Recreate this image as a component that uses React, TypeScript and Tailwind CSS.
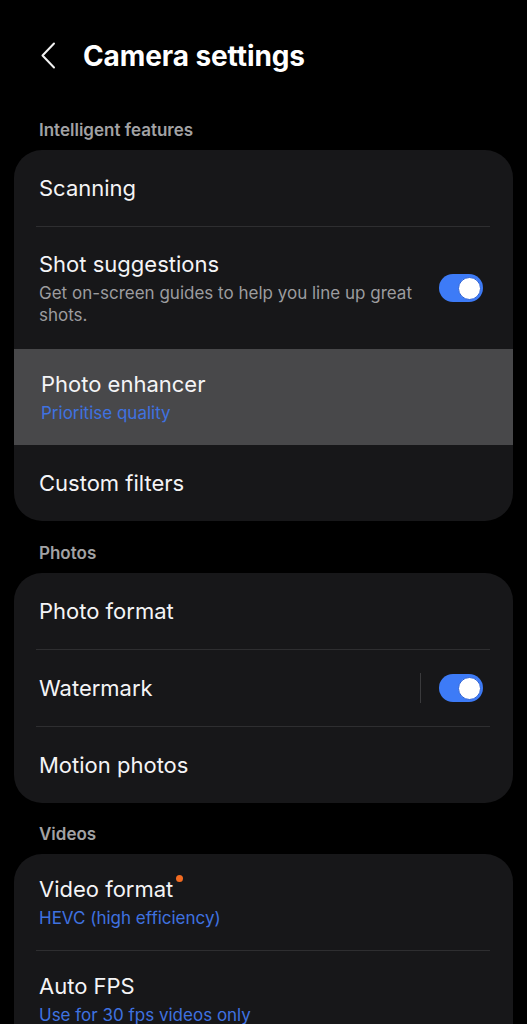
import React from 'react';

type Row = {
  title: string;
  subtitle?: string;
  blue?: boolean;
  toggle?: boolean;
  divider?: boolean;
  dot?: boolean;
  highlight?: boolean;
};

function Toggle() {
  return (
    <div className="flex h-[28px] w-[44px] shrink-0 items-center justify-end rounded-full bg-[#3d7bf7] pr-[2px]">
      <div className="h-[23px] w-[23px] rounded-full border border-[#2f63d6] bg-white" />
    </div>
  );
}

function SectionLabel({ text, top }: { text: string; top?: string }) {
  return (
    <div className={`px-[39px] pb-[10px] ${top ?? 'pt-[22px]'} text-[17px] font-semibold leading-[20px] text-[#a2a2a4]`}>
      {text}
    </div>
  );
}

function SettingRow({ row, height, pad }: { row: Row; height?: string; pad?: string }) {
  const hasSub = !!row.subtitle;
  return (
    <div
      className={`flex items-center ${row.highlight ? 'bg-[#48484a] pl-[27px]' : 'pl-[25px]'} pr-[30px] ${
        hasSub ? pad ?? 'pb-[21px] pt-[21px]' : ''
      } ${height ?? ''}`}
    >
      <div className="min-w-0 flex-1">
        <div className="flex items-start">
          <span className="text-[22px] leading-[28px] text-[#f4f4f6]">{row.title}</span>
          {row.dot && <span className="ml-[3px] h-[7px] w-[7px] rounded-full bg-[#f26b21]" />}
        </div>
        {row.subtitle && (
          <div
            className={`mt-[4px] text-[17px] leading-[22px] ${
              row.blue ? 'text-[#3f72e0]' : 'text-[#9c9c9f]'
            } ${row.toggle ? 'pr-[20px]' : ''}`}
          >
            {row.subtitle}
          </div>
        )}
      </div>
      {row.divider && <div className="mr-[18px] h-[30px] w-px bg-[#3a3a3c]" />}
      {row.toggle && <Toggle />}
    </div>
  );
}

function Divider() {
  return <div className="ml-[22px] mr-[23px] h-px bg-[#2e2e30]" />;
}

export default function App() {
  return (
    <div
      className="h-[1024px] w-[527px] overflow-hidden bg-black"
      style={{ fontFamily: 'Inter, Roboto, "Noto Sans", sans-serif' }}
    >
      <div className="flex h-[112px] items-center pl-[40px]">
        <svg width="16" height="27" viewBox="0 0 16 27" fill="none" className="mt-[-2px]">
          <path d="M14 1.5 L2.5 13.5 L14 25.5" stroke="#f2f2f2" strokeWidth="2" strokeLinecap="round" strokeLinejoin="round" />
        </svg>
        <h1 className="ml-[27px] text-[28px] font-bold tracking-[-0.1px] text-white">Camera settings</h1>
      </div>

      <SectionLabel text="Intelligent features" top="pt-[8px]" />
      <div className="mx-[14px] overflow-hidden rounded-[28px] bg-[#171719]">
        <SettingRow row={{ title: 'Scanning' }} height="h-[76px]" />
        <Divider />
        <SettingRow
          row={{
            title: 'Shot suggestions',
            subtitle: 'Get on-screen guides to help you line up great shots.',
            toggle: true,
          }}
          pad="pt-[23px] pb-[23px]"
        />
        <SettingRow row={{ title: 'Photo enhancer', subtitle: 'Prioritise quality', blue: true, highlight: true }} />
        <SettingRow row={{ title: 'Custom filters' }} height="h-[76px]" />
      </div>

      <SectionLabel text="Photos" />
      <div className="mx-[14px] overflow-hidden rounded-[28px] bg-[#171719]">
        <SettingRow row={{ title: 'Photo format' }} height="h-[76px]" />
        <Divider />
        <SettingRow row={{ title: 'Watermark', toggle: true, divider: true }} height="h-[76px]" />
        <Divider />
        <SettingRow row={{ title: 'Motion photos' }} height="h-[76px]" />
      </div>

      <SectionLabel text="Videos" top="pt-[21px]" />
      <div className="mx-[14px] overflow-hidden rounded-t-[28px] bg-[#171719]">
        <SettingRow row={{ title: 'Video format', subtitle: 'HEVC (high efficiency)', blue: true, dot: true }} />
        <Divider />
        <SettingRow row={{ title: 'Auto FPS', subtitle: 'Use for 30 fps videos only', blue: true }} />
      </div>
    </div>
  );
}
